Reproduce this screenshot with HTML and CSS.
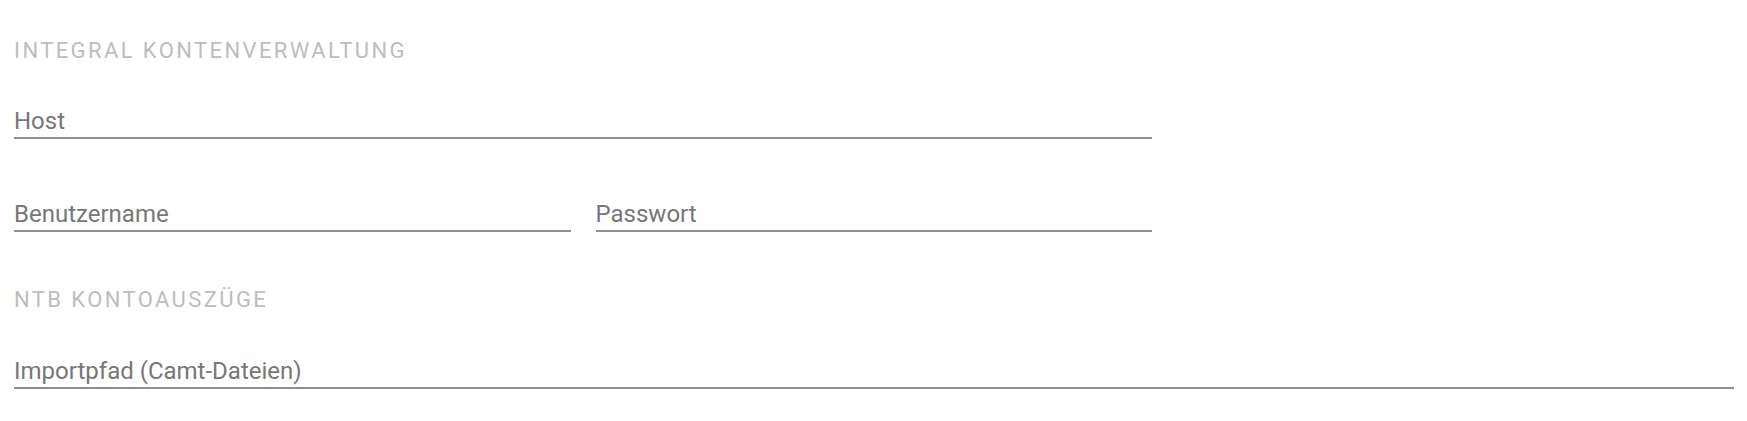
FILE: index.html
```html
<!DOCTYPE html>
<html lang="de">
<head>
    <meta charset="UTF-8">
    <meta name="viewport" content="width=device-width, initial-scale=1.0">
    <title>Einstellungen</title>
    <link rel="stylesheet" href="styles.css">
</head>
<body>

<div class="settings">
    <!-- Integral -->
    <h3 class="section-title">Integral Kontenverwaltung</h3>
    <div class="row">
        <input type="text" class="field field-wide" placeholder="Host">
    </div>
    <div class="row row-split">
        <input type="text" class="field" placeholder="Benutzername">
        <input type="password" class="field" placeholder="Passwort">
    </div>

    <!-- NTB -->
    <h3 class="section-title second">NTB Kontoauszüge</h3>
    <div class="row row-last">
        <input type="text" class="field field-full" placeholder="Importpfad (Camt-Dateien)">
    </div>
</div>

</body>
</html>
```

FILE: styles.css
```css
body {
    margin: 0;
    font-family: Roboto, "Liberation Sans", sans-serif;
    background-color: #fff;
}
.settings {
    padding: 39px 13px 0 14px;
}
.section-title {
    margin: 0;
    font-size: 22px;
    font-weight: 400;
    line-height: 24px;
    letter-spacing: 2.4px;
    text-transform: uppercase;
    color: #bdbdbd;
}
.section-title.second {
    margin-top: 56px;
}
.row {
    margin-top: 42px;
    width: 1138px;
}
.row-split {
    margin-top: 59px;
    display: grid;
    grid-template-columns: 1fr 1fr;
    column-gap: 25px;
}
.row-last {
    margin-top: 43px;
}
.field {
    display: block;
    width: 100%;
    box-sizing: border-box;
    height: 34px;
    padding: 1px 0 1px 0;
    margin: 0;
    border: none;
    border-bottom: 2px solid #8f8f8f;
    outline: none;
    font-family: inherit;
    font-size: 24px;
    color: #444;
    background: transparent;
}
.field::placeholder {
    color: #777;
}
.field-full {
    width: 1720px;
}
```
